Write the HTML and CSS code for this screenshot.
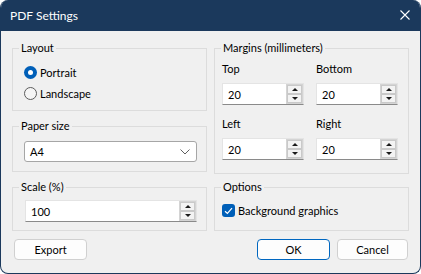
FILE: index.html
```html
<!DOCTYPE html>
<html lang="en">
<head>
    <meta charset="UTF-8">
    <meta name="viewport" content="width=device-width, initial-scale=1.0">
    <title>PDF Settings</title>
    <link rel="stylesheet" href="styles.css">
</head>
<body>

    <div class="window">
        <!-- Title bar -->
        <div class="titlebar">
            <span class="title">PDF Settings</span>
            <button class="close" aria-label="Close">
                <svg width="10" height="10" viewBox="0 0 10 10">
                    <path d="M0.5 0.5 L9.5 9.5 M9.5 0.5 L0.5 9.5" stroke="#fff" stroke-width="1.1" fill="none"/>
                </svg>
            </button>
        </div>

        <div class="content">
            <div class="panes">
                <div class="col col-left">
                    <!-- Layout -->
                    <fieldset class="group group-layout">
                        <legend>Layout</legend>
                        <label class="radio-row">
                            <span class="radio checked"></span>Portrait
                        </label>
                        <label class="radio-row">
                            <span class="radio"></span>Landscape
                        </label>
                    </fieldset>

                    <!-- Paper size -->
                    <fieldset class="group group-paper">
                        <legend>Paper size</legend>
                        <div class="select">
                            <span>A4</span>
                            <svg width="10" height="6" viewBox="0 0 10 6">
                                <path d="M0.5 0.5 L5 5 L9.5 0.5" stroke="#606060" stroke-width="1" fill="none"/>
                            </svg>
                        </div>
                    </fieldset>

                    <!-- Scale -->
                    <fieldset class="group group-scale">
                        <legend>Scale (%)</legend>
                        <div class="spinbox spin-wide">
                            <span class="value">100</span>
                            <div class="spin">
                                <span class="spin-btn"><i class="arrow up"></i></span>
                                <span class="spin-btn"><i class="arrow down"></i></span>
                            </div>
                        </div>
                    </fieldset>
                </div>

                <div class="col col-right">
                    <!-- Margins -->
                    <fieldset class="group group-margins">
                        <legend>Margins (millimeters)</legend>
                        <div class="margin-grid">
                            <div class="field">
                                <div class="field-label">Top</div>
                                <div class="spinbox">
                                    <span class="value">20</span>
                                    <div class="spin">
                                        <span class="spin-btn"><i class="arrow up"></i></span>
                                        <span class="spin-btn"><i class="arrow down"></i></span>
                                    </div>
                                </div>
                            </div>
                            <div class="field">
                                <div class="field-label">Bottom</div>
                                <div class="spinbox">
                                    <span class="value">20</span>
                                    <div class="spin">
                                        <span class="spin-btn"><i class="arrow up"></i></span>
                                        <span class="spin-btn"><i class="arrow down"></i></span>
                                    </div>
                                </div>
                            </div>
                            <div class="field">
                                <div class="field-label">Left</div>
                                <div class="spinbox">
                                    <span class="value">20</span>
                                    <div class="spin">
                                        <span class="spin-btn"><i class="arrow up"></i></span>
                                        <span class="spin-btn"><i class="arrow down"></i></span>
                                    </div>
                                </div>
                            </div>
                            <div class="field">
                                <div class="field-label">Right</div>
                                <div class="spinbox">
                                    <span class="value">20</span>
                                    <div class="spin">
                                        <span class="spin-btn"><i class="arrow up"></i></span>
                                        <span class="spin-btn"><i class="arrow down"></i></span>
                                    </div>
                                </div>
                            </div>
                        </div>
                    </fieldset>

                    <!-- Options -->
                    <fieldset class="group group-options">
                        <legend>Options</legend>
                        <label class="check-row">
                            <span class="checkbox">
                                <svg width="9" height="8" viewBox="0 0 9 8">
                                    <path d="M1 4.2 L3.4 6.5 L8 1.2" stroke="#fff" stroke-width="1.2" fill="none"/>
                                </svg>
                            </span>Background graphics
                        </label>
                    </fieldset>
                </div>
            </div>

            <!-- Buttons -->
            <div class="buttons">
                <button class="btn btn-export">Export</button>
                <div class="buttons-right">
                    <button class="btn btn-default">OK</button>
                    <button class="btn btn-cancel">Cancel</button>
                </div>
            </div>
        </div>
    </div>

</body>
</html>
```

FILE: styles.css
```css
body {
    margin: 0;
    padding: 0;
    background: #ffffff;
    font-family: Lato, "Noto Sans", sans-serif;
    font-size: 11px;
    color: #000;
}
.window {
    width: 421px;
    height: 274px;
    box-sizing: border-box;
    border: 1px solid #1b395c;
    border-top: none;
    border-radius: 8px;
    background: #f0f0f0;
    overflow: hidden;
    display: flex;
    flex-direction: column;
}
.titlebar {
    height: 31px;
    background: #1b395c;
    display: flex;
    align-items: center;
    justify-content: space-between;
    padding: 0 9px 0 9px;
    flex-shrink: 0;
}
.title {
    color: #fff;
    font-size: 12px;
    line-height: 16px;
    margin-top: 1px;
}
.close {
    border: none;
    background: none;
    padding: 0;
    width: 10px;
    height: 10px;
    display: flex;
    margin-right: 1px;
    margin-top: -1px;
}
.content {
    padding: 9px 10px 0 11px;
}
.panes {
    display: grid;
    grid-template-columns: 195px 195px;
    column-gap: 7px;
}
.col {
    display: flex;
    flex-direction: column;
}
.col-left {
    gap: 7px;
}
.col-right {
    gap: 5px;
}
.group {
    margin: 0;
    padding: 0;
    border: 1px solid #dcdcdc;
    min-width: 0;
    box-sizing: border-box;
}
.group legend {
    margin-left: 6px;
    padding: 0 2px;
    line-height: 16px;
}
.group-layout {
    height: 71px;
}
.group-paper {
    height: 54px;
}
.group-scale {
    height: 52px;
}
.group-margins {
    height: 134px;
}
.group-options {
    height: 52px;
}

/* radios */
.group-layout .radio-row:first-of-type {
    margin-top: 6px;
}
.radio-row {
    display: flex;
    align-items: center;
    height: 21px;
    padding-left: 11px;
}
.radio {
    width: 13px;
    height: 13px;
    box-sizing: border-box;
    border-radius: 50%;
    border: 1px solid #5c5c5c;
    background: #f5f5f5;
    margin-right: 3px;
    position: relative;
}
.radio.checked {
    border: none;
    background: #005fb8;
}
.radio.checked::after {
    content: "";
    position: absolute;
    left: 4px;
    top: 4px;
    width: 5px;
    height: 5px;
    border-radius: 50%;
    background: #fff;
}

/* select */
.select {
    margin: 7px 0 0 11px;
    width: 173px;
    height: 21px;
    box-sizing: border-box;
    background: #fff;
    border: 1px solid #a6a6a6;
    border-radius: 3px;
    display: flex;
    align-items: center;
    justify-content: space-between;
    padding: 0 6px 0 5px;
}

/* spin boxes */
.spinbox {
    width: 82px;
    height: 22px;
    box-sizing: border-box;
    background: #fff;
    border: 1px solid #e4e4e4;
    border-bottom: 1px solid #8a8a8a;
    display: flex;
    align-items: center;
    justify-content: space-between;
}
.spin-wide {
    width: 172px;
    margin: 5px 0 0 12px;
}
.value {
    padding-left: 5px;
}
.spin {
    width: 17px;
    height: 20px;
    box-sizing: border-box;
    border: 1px solid #d4d4d4;
    background: #f6f6f6;
    display: flex;
    flex-direction: column;
    justify-content: space-between;
    padding: 0;
}
.spin-btn {
    height: 9px;
    box-sizing: border-box;
    border: 1px solid #c9c9c9;
    background: #f3f3f3;
    display: flex;
    align-items: center;
    justify-content: center;
}
.arrow {
    width: 0;
    height: 0;
    border-left: 3px solid transparent;
    border-right: 3px solid transparent;
}
.arrow.up {
    border-bottom: 3px solid #1a1a1a;
}
.arrow.down {
    border-top: 3px solid #1a1a1a;
}

/* margins grid */
.margin-grid {
    display: grid;
    grid-template-columns: 82px 82px;
    column-gap: 12px;
    row-gap: 11px;
    padding: 5px 0 0 7px;
}
.field-label {
    line-height: 16px;
    margin-bottom: 6px;
}

/* checkbox */
.check-row {
    display: flex;
    align-items: center;
    margin: 8px 0 0 7px;
    height: 15px;
}
.checkbox {
    width: 13px;
    height: 13px;
    border-radius: 3px;
    background: #005fb8;
    display: flex;
    align-items: center;
    justify-content: center;
    margin-right: 3px;
}

/* buttons */
.buttons {
    display: flex;
    justify-content: space-between;
    margin-top: 8px;
    padding: 0 2px 0 2px;
}
.buttons-right {
    display: flex;
    gap: 7px;
}
.btn {
    font-family: inherit;
    font-size: 11px;
    color: #000;
    height: 21px;
    padding: 0;
    box-sizing: border-box;
    background: #fdfdfd;
    border: 1px solid #d0d0d0;
    border-radius: 4px;
}
.btn-export {
    width: 73px;
}
.btn-default {
    width: 73px;
    border: 1px solid #0067c0;
}
.btn-cancel {
    width: 71px;
}
```
